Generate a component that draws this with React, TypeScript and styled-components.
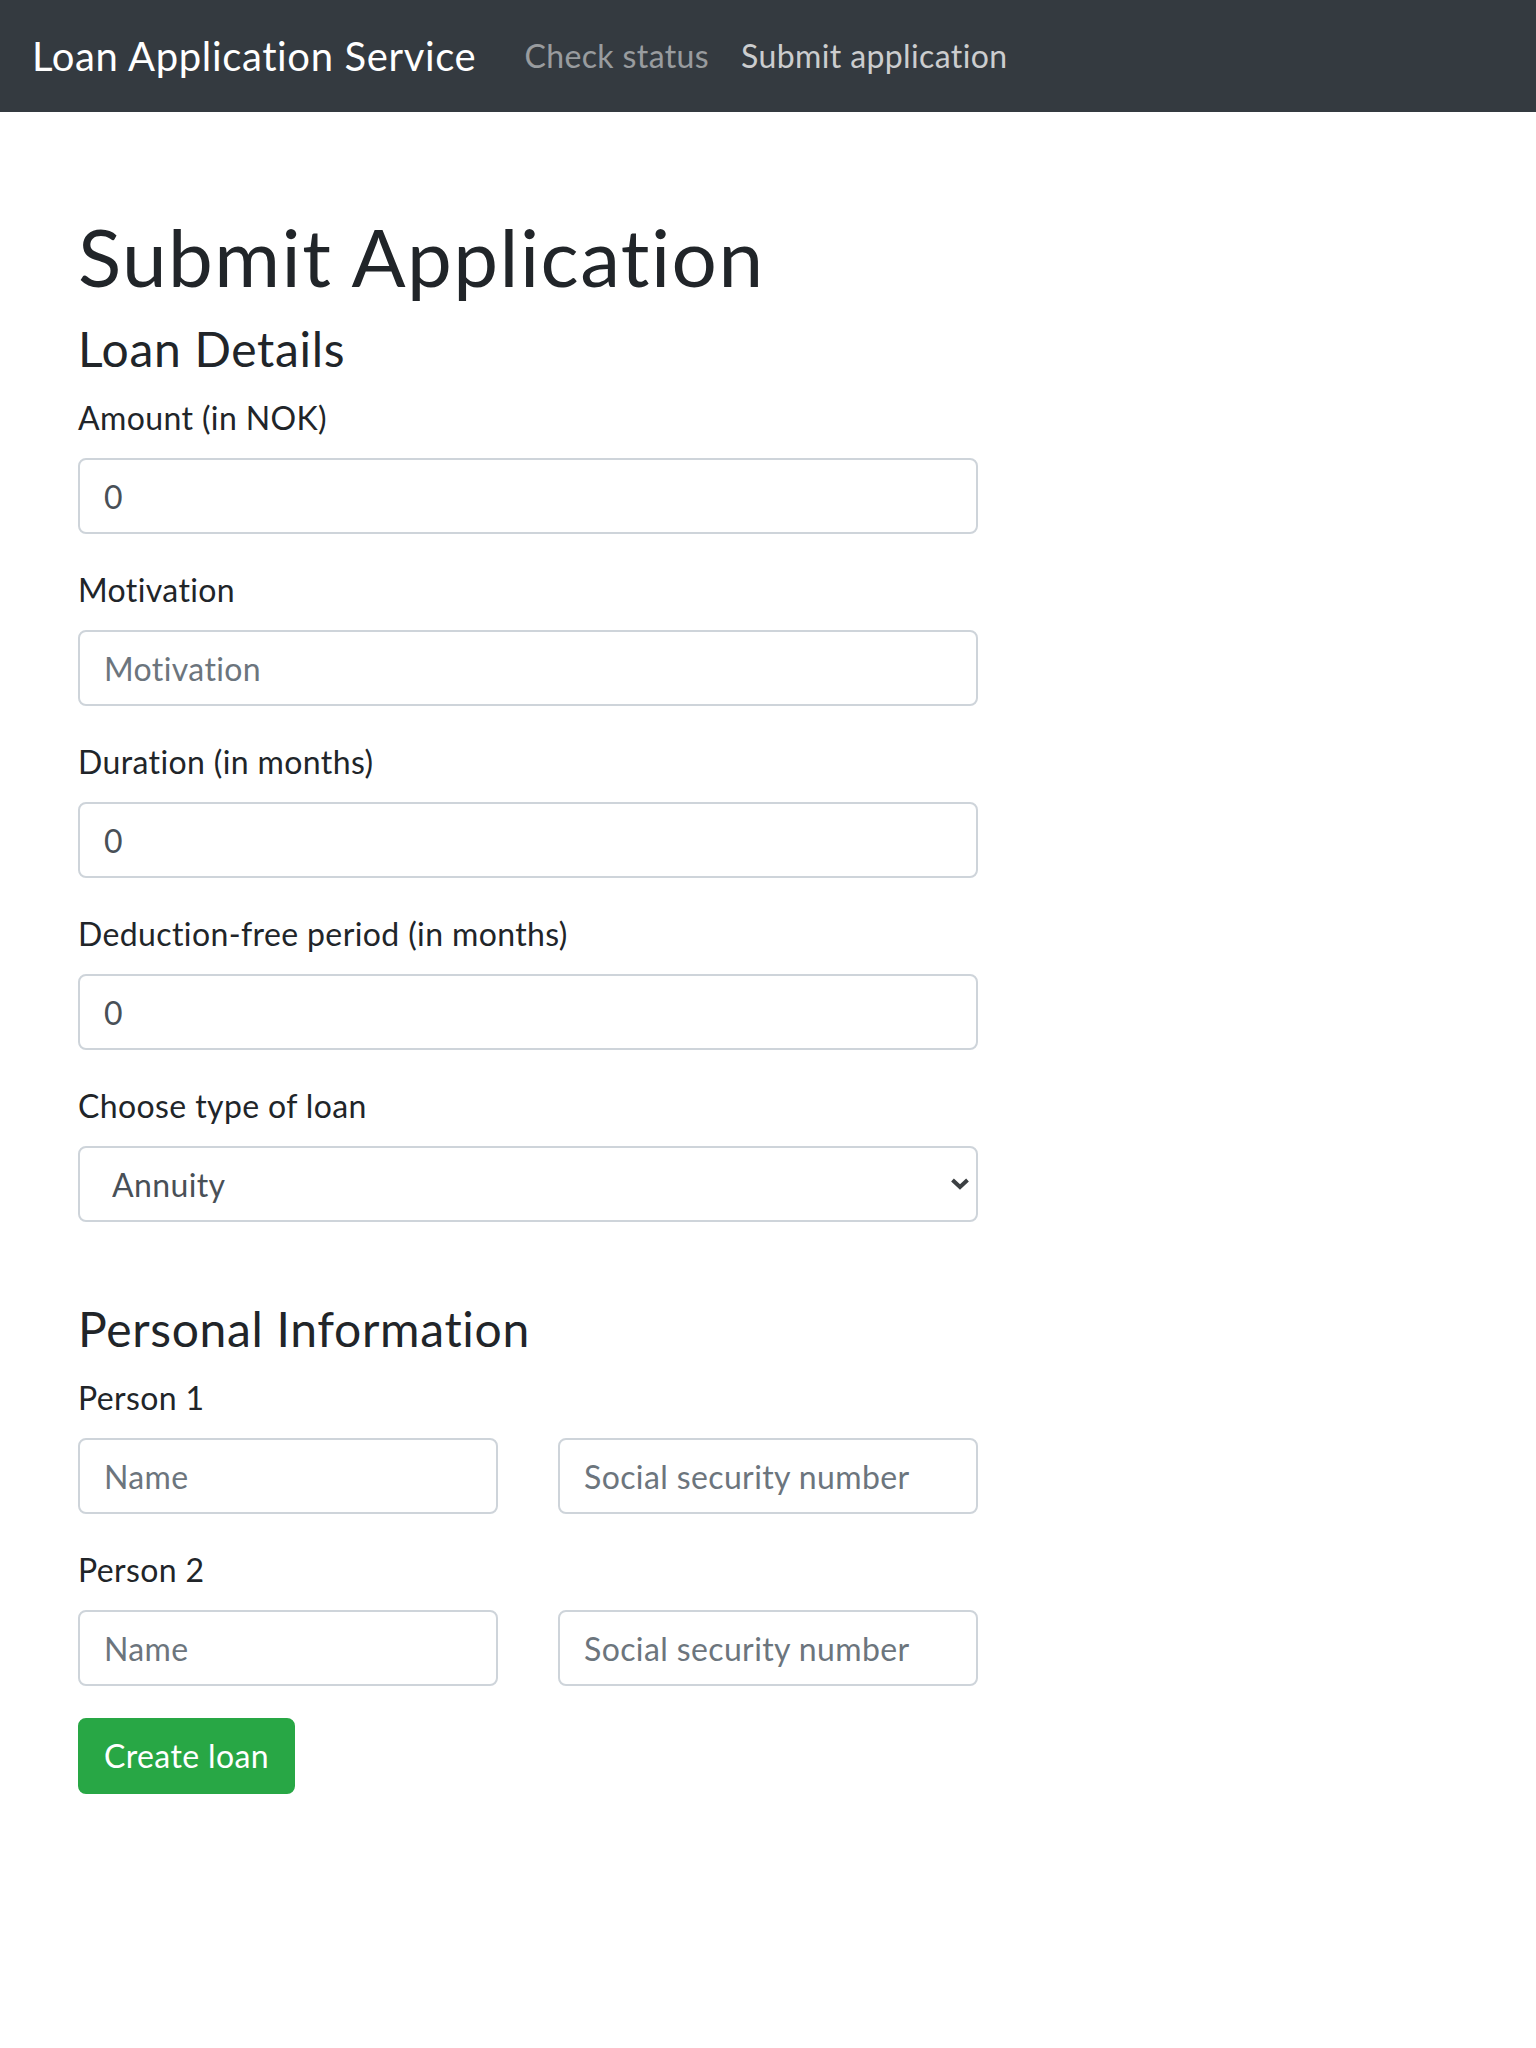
import React from "react";
import styled, { createGlobalStyle } from "styled-components";

const GlobalStyle = createGlobalStyle`
  * { box-sizing: border-box; }
  html, body { margin: 0; padding: 0; background: #fff; }
  body {
    font-family: "Lato", "Open Sans", "Noto Sans", sans-serif;
    font-size: 32px;
    line-height: 1.5;
    letter-spacing: 0.012em;
    color: #212529;
  }
`;

const Navbar = styled.nav`
  height: 112px;
  background: #343a40;
  display: flex;
  align-items: center;
  padding: 0 32px;
`;

const Brand = styled.a`
  font-size: 40px;
  line-height: 60px;
  letter-spacing: 0.016em;
  color: #fff;
  margin-right: 32px;
  text-decoration: none;
`;

const NavLink = styled.a<{ $active?: boolean }>`
  font-size: 32px;
  line-height: 48px;
  padding: 0 16px;
  text-decoration: none;
  color: ${(p) => (p.$active ? "rgba(255,255,255,0.75)" : "rgba(255,255,255,0.5)")};
`;

const Container = styled.main`
  max-width: 1440px;
  margin: 96px auto 0;
  padding: 0 30px;
`;

const Title = styled.h1`
  font-size: 80px;
  line-height: 96px;
  font-weight: 400;
  letter-spacing: 0.018em;
  margin: 0 0 16px;
`;

const SectionTitle = styled.h4<{ $spaced?: boolean }>`
  font-size: 48px;
  line-height: 58px;
  font-weight: 400;
  letter-spacing: 0.014em;
  margin: ${(p) => (p.$spaced ? "78px" : "0")} 0 16px;
`;

const Form = styled.form`
  max-width: 900px;
  padding-bottom: 200px;
`;

const Group = styled.div`
  margin-bottom: 32px;
`;

const Label = styled.label`
  display: block;
  font-size: 32px;
  line-height: 48px;
  margin-bottom: 16px;
`;

const Input = styled.input`
  display: block;
  width: 100%;
  height: 76px;
  padding: 12px 24px;
  font-family: inherit;
  font-size: 32px;
  line-height: 48px;
  letter-spacing: inherit;
  color: #495057;
  background: #fff;
  border: 2px solid #ced4da;
  border-radius: 8px;
  outline: none;
  &::placeholder { color: #6c757d; opacity: 1; }
`;

const SelectWrap = styled.div`
  position: relative;
`;

const Select = styled.select`
  display: block;
  width: 100%;
  height: 76px;
  padding: 12px 24px 12px 32px;
  font-family: inherit;
  font-size: 32px;
  letter-spacing: inherit;
  color: #495057;
  background: #fff;
  border: 2px solid #ced4da;
  border-radius: 8px;
  appearance: none;
  -webkit-appearance: none;
  outline: none;
`;

const Chevron = styled.svg`
  position: absolute;
  right: 8px;
  top: 50%;
  transform: translateY(-50%);
  pointer-events: none;
`;

const Row = styled.div`
  display: grid;
  grid-template-columns: 1fr 1fr;
  column-gap: 60px;
`;

const Button = styled.button`
  height: 76px;
  padding: 12px 24px;
  font-family: inherit;
  font-size: 32px;
  line-height: 48px;
  letter-spacing: inherit;
  color: #fff;
  background: #28a745;
  border: 2px solid #28a745;
  border-radius: 8px;
  cursor: pointer;
`;

export default function App() {
  return (
    <>
      <GlobalStyle />
      <Navbar>
        <Brand href="#">Loan Application Service</Brand>
        <NavLink href="#">Check status</NavLink>
        <NavLink href="#" $active>
          Submit application
        </NavLink>
      </Navbar>
      <Container>
        <Title>Submit Application</Title>
        <Form onSubmit={(e) => e.preventDefault()}>
          <SectionTitle>Loan Details</SectionTitle>
          <Group>
            <Label>Amount (in NOK)</Label>
            <Input type="number" defaultValue={0} />
          </Group>
          <Group>
            <Label>Motivation</Label>
            <Input type="text" placeholder="Motivation" />
          </Group>
          <Group>
            <Label>Duration (in months)</Label>
            <Input type="number" defaultValue={0} />
          </Group>
          <Group>
            <Label>Deduction-free period (in months)</Label>
            <Input type="number" defaultValue={0} />
          </Group>
          <Group>
            <Label>Choose type of loan</Label>
            <SelectWrap>
              <Select defaultValue="annuity">
                <option value="annuity">Annuity</option>
                <option value="serial">Serial</option>
              </Select>
              <Chevron width="20" height="14" viewBox="0 0 20 14">
                <path d="M2.5 3 L10 10 L17.5 3" fill="none" stroke="#3c4043" strokeWidth="4" />
              </Chevron>
            </SelectWrap>
          </Group>
          <SectionTitle $spaced>Personal Information</SectionTitle>
          <Group>
            <Label>Person 1</Label>
            <Row>
              <Input type="text" placeholder="Name" />
              <Input type="text" placeholder="Social security number" />
            </Row>
          </Group>
          <Group>
            <Label>Person 2</Label>
            <Row>
              <Input type="text" placeholder="Name" />
              <Input type="text" placeholder="Social security number" />
            </Row>
          </Group>
          <Button type="submit">Create loan</Button>
        </Form>
      </Container>
    </>
  );
}
